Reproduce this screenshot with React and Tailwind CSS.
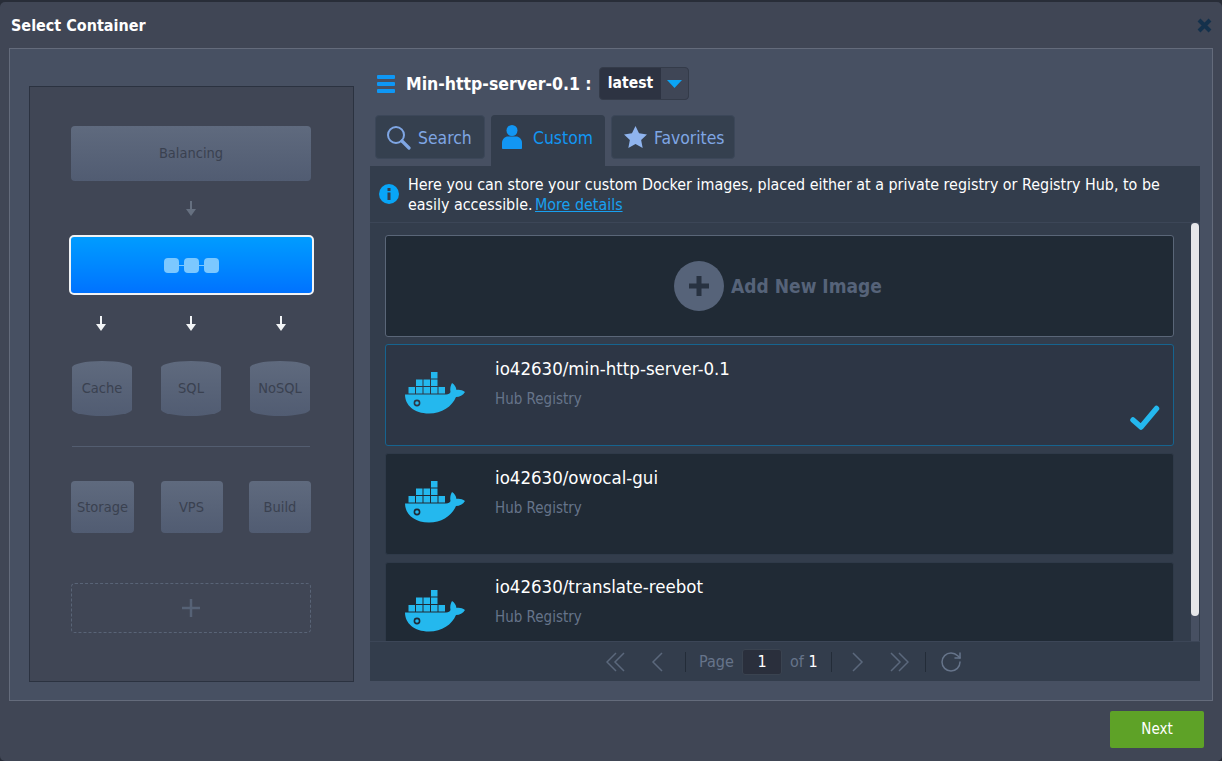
import React from 'react';
import { RotateCw } from 'lucide-react';

const FONT = "font-['DejaVu_Sans_Condensed','DejaVu_Sans',sans-serif]";

const DownArrow = ({ color = '#f1f3f5' }) => (
  <svg width="10" height="15" viewBox="0 0 10 15">
    <path d="M4 0h2v8h4l-5 7-5-7h4z" fill={color} />
  </svg>
);

const Docker = ({ eye }) => (
  <svg width="60" height="42" viewBox="0 0 60 42" className="shrink-0">
    <g fill="#24b8ee">
      <rect x="26" y="0" width="6.5" height="6.5" />
      <rect x="11" y="7.5" width="6.5" height="6.5" />
      <rect x="18.5" y="7.5" width="6.5" height="6.5" />
      <rect x="26" y="7.5" width="6.5" height="6.5" />
      <rect x="3.500" y="15" width="6.5" height="6.500" />
      <rect x="11" y="15" width="6.5" height="6.5" />
      <rect x="18.5" y="15" width="6.5" height="6.5" />
      <rect x="26" y="15" width="6.5" height="6.5" />
      <rect x="33.5" y="15" width="6.500" height="6.5" />
      <path d="M0 22.500H41C43.500 22.500 45 21.500 45.500 20C44.800 17 45.500 13.500 47 11C49.500 12.500 51 15 51.500 18C54 17.500 57.500 18 60 20C58 23.500 54.500 25 51 25C47 34.500 37 41.500 24 41.500C9 41.500 0 33 0 22.500Z" />
    </g>
    <circle cx="12" cy="31" r="2.600" fill="none" stroke={eye} strokeWidth="1.600" />
  </svg>
);

const ServerBox = ({ label, className }) => (
  <div className={`flex items-center justify-center bg-linear-to-b from-[#5f6a7e] to-[#515c72] pt-[1px] text-[14.5px] text-[#3a4150] ${className}`}>
    {label}
  </div>
);

const ImageCard = ({ name, selected }) => (
  <div className={`relative flex h-[102px] shrink-0 rounded-[3px] border pl-[19px] ${selected ? 'border-[#16648f] bg-[#2d3645]' : 'border-[#2f3a49] bg-[#202a35]'}`}>
    <div className="pt-[27px]">
      <Docker eye={selected ? '#2d3645' : '#202a35'} />
    </div>
    <div className="ml-[30px] pt-[10px]">
      <div className="text-[18.5px] leading-[28px] text-white">{name}</div>
      <div className="mt-[6px] text-[15px] leading-[20px] text-[#66748a]">Hub Registry</div>
    </div>
    {selected && (
      <svg width="30" height="26" viewBox="0 0 30 26" className="absolute right-[13px] bottom-[14px]">
        <path d="M3 15l8 7L26.500 3.500" fill="none" stroke="#24b8ee" strokeWidth="5.500" strokeLinecap="round" strokeLinejoin="round" />
      </svg>
    )}
  </div>
);

const Chevrons = ({ dir, double }) => (
  <svg width="20" height="20" viewBox="0 0 20 20" fill="none" stroke="#5b687c" strokeWidth="1.500">
    {dir === 'left' ? (
      <>
        <path d={double ? 'M10 1L1 10l9 9' : 'M14 1l-9 9 9 9'} />
        {double && <path d="M18 1l-9 9 9 9" />}
      </>
    ) : (
      <>
        <path d={double ? 'M2 1l9 9-9 9' : 'M6 1l9 9-9 9'} />
        {double && <path d="M10 1l9 9-9 9" />}
      </>
    )}
  </svg>
);

const Sep = ({ className = '' }) => <div className={`h-[20px] w-px shrink-0 bg-[#232c38] ${className}`} />;

export default function App() {
  return (
    <div className={`${FONT} flex h-[761px] w-[1222px] flex-col overflow-hidden bg-[#282d38]`}>
      <div className="mt-[2px] flex min-h-0 flex-1 flex-col rounded-[5px] bg-[#404655]">
        {/* header */}
        <div className="flex h-[46px] shrink-0 items-center justify-between pr-[10px] pl-[11px]">
          <span className="pt-[2px] text-[16px] font-bold text-white">Select Container</span>
          <svg width="15" height="15" viewBox="0 0 15 15">
            <path d="M2 2l11 11M13 2L2 13" stroke="#14314c" strokeWidth="4" />
          </svg>
        </div>

        <div className="mx-[9px] flex h-[653px] shrink-0 border border-[#646b7b] bg-[#475062] pt-[18px] pr-[12px] pb-[18px] pl-[19px]">
          {/* left: topology */}
          <div className="mt-[19px] flex h-[596px] w-[325px] shrink-0 flex-col items-center border border-[#2b3240] bg-[#404655] pt-[39px] pr-[1px]">
            <ServerBox label="Balancing" className="h-[55px] w-[240px] rounded-[4px]" />
            <div className="mt-[20px] h-[15px]"><DownArrow color="#667080" /></div>
            <div className="mt-[19px] flex h-[60px] w-[245px] items-center justify-center rounded-[5px] border-[2px] border-[#f1f3f5] bg-linear-to-b from-[#009cff] to-[#0072ff]">
              <div className="flex items-center">
                <div className="size-[15px] rounded-[4px] bg-[#7cc8ff]" />
                <div className="h-px w-[5px] bg-[#7cc8ff]" />
                <div className="size-[15px] rounded-[4px] bg-[#7cc8ff]" />
                <div className="h-px w-[5px] bg-[#7cc8ff]" />
                <div className="size-[15px] rounded-[4px] bg-[#7cc8ff]" />
              </div>
            </div>
            <div className="mt-[21px] flex h-[15px] w-[190px] justify-between">
              <DownArrow /><DownArrow /><DownArrow />
            </div>
            <div className="mt-[30px] flex w-[238px] justify-between">
              {['Cache', 'SQL', 'NoSQL'].map((l) => (
                <ServerBox key={l} label={l} className="h-[55px] w-[60px] rounded-[50%/12%]" />
              ))}
            </div>
            <div className="mt-[30px] h-px w-[238px] bg-[#535d70]" />
            <div className="mt-[34px] flex w-[240px] justify-between">
              <ServerBox label="Storage" className="h-[52px] w-[63px] rounded-[4px]" />
              <ServerBox label="VPS" className="h-[52px] w-[62px] rounded-[4px]" />
              <ServerBox label="Build" className="h-[52px] w-[62px] rounded-[4px]" />
            </div>
            <div className="mt-[50px] flex h-[50px] w-[240px] items-center justify-center rounded-[4px] border border-dashed border-[#596477]">
              <svg width="18" height="18" viewBox="0 0 18 18">
                <path d="M9 0v18M0 9h18" stroke="#566276" strokeWidth="2.500" />
              </svg>
            </div>
          </div>

          {/* right */}
          <div className="ml-[16px] flex min-w-0 flex-1 flex-col">
            <div className="flex h-[33px] shrink-0 items-center">
              <div className="ml-[7px] flex w-[18px] flex-col gap-[3px]">
                <div className="h-[4px] rounded-[1px] bg-[#0e97f5]" />
                <div className="h-[4px] rounded-[1px] bg-[#0e97f5]" />
                <div className="h-[4px] rounded-[1px] bg-[#0e97f5]" />
              </div>
              <span className="ml-[11px] w-[186px] pt-[1px] text-[17.500px] font-bold whitespace-nowrap text-white">Min-http-server-0.1 :</span>
              <div className="ml-[7px] flex h-[33px] w-[90px] overflow-hidden rounded-[4px] border border-[#343b49] bg-[#2d3342]">
                <span className="flex w-[61px] items-center justify-center pt-[1px] text-[15.5px] font-bold text-white">latest</span>
                <span className="flex flex-1 items-center justify-center bg-[#3f4656]">
                  <svg width="15" height="8" viewBox="0 0 15 8"><path d="M0 0h15L7.500 8z" fill="#0ba5f5" /></svg>
                </span>
              </div>
            </div>

            {/* tabs */}
            <div className="mt-[15px] flex h-[51px] shrink-0 items-start pl-[5px] text-[17.4px]">
              <div className="flex h-[44px] w-[110px] items-center rounded-[4px] border border-[#3c4759] bg-[#35404f] pl-[10px] text-[#7fa6e4]">
                <svg width="25" height="25" viewBox="0 0 25 25" fill="none" stroke="#7fa6e4" className="shrink-0">
                  <circle cx="10" cy="10" r="8" strokeWidth="2" />
                  <path d="M16 16l7 7" strokeWidth="3.200" strokeLinecap="round" />
                </svg>
                <span className="ml-[7px] pt-[2px]">Search</span>
              </div>
              <div className="ml-[6px] flex h-[51px] w-[114px] items-start rounded-t-[4px] bg-[#333d4c] pt-[9px] pl-[11px] text-[#1296f3]">
                <svg width="20" height="25" viewBox="0 0 20 25" fill="#1296f3">
                  <circle cx="10" cy="6.500" r="5.500" />
                  <path d="M0 24v-5c0-4 3-6.500 6-6.500h8c3 0 6 2.500 6 6.500v5c0 .6-.5 1-1 1H1c-.5 0-1-.4-1-1z" />
                </svg>
                <span className="ml-[11px] pt-[1px] leading-[26px]">Custom</span>
              </div>
              <div className="ml-[6px] flex h-[44px] w-[124px] items-center rounded-[4px] border border-[#3c4759] bg-[#35404f] pl-[12px] text-[#7fa6e4]">
                <svg width="23" height="22" viewBox="0 0 24 23" fill="#8fb4ee">
                  <path d="M12 0l3.700 7.700 8.300 1.100-6.100 5.800 1.600 8.400L12 18.900 4.500 23l1.600-8.400L0 8.800l8.300-1.100z" />
                </svg>
                <span className="ml-[7px] pt-[2px]">Favorites</span>
              </div>
            </div>

            <div className="flex h-[515px] shrink-0 flex-col bg-[#333d4c]">
              {/* info bar */}
              <div className="flex h-[57px] shrink-0 items-center border-b border-[#3c4657] pl-[9px] text-[15.900px] leading-[20px] text-white">
                <svg width="20" height="20" viewBox="0 0 20 20" className="shrink-0">
                  <circle cx="10" cy="10" r="10" fill="#08a5f7" />
                  <rect x="8.500" y="4" width="3" height="3" fill="#333d4c" />
                  <rect x="8.500" y="8.500" width="3" height="7.500" fill="#333d4c" />
                </svg>
                <div className="ml-[9px] pt-[2px] whitespace-nowrap">
                  <div>Here you can store your custom Docker images, placed either at a private registry or Registry Hub, to be</div>
                  <div className="flex">
                    <span className="w-[127px]">easily accessible.</span>
                    <span className="text-[#18a0f0] underline">More details</span>
                  </div>
                </div>
              </div>

              {/* list */}
              <div className="flex min-h-0 flex-1">
                <div className="flex min-w-0 flex-1 flex-col gap-[7px] overflow-hidden pt-[12px] pr-[17px] pl-[15px]">
                  <div className="flex h-[102px] shrink-0 items-center justify-center rounded-[3px] border border-[#5a6678] bg-[#202a35] pr-[3px]">
                    <div className="flex size-[50px] items-center justify-center rounded-full bg-[#566379]">
                      <svg width="22" height="22" viewBox="0 0 22 22">
                        <path d="M11 1v20M1 11h20" stroke="#283241" strokeWidth="5" />
                      </svg>
                    </div>
                    <span className="ml-[7px] pt-[1px] text-[19px] font-bold text-[#566379]">Add New Image</span>
                  </div>
                  <ImageCard name="io42630/min-http-server-0.1" selected />
                  <ImageCard name="io42630/owocal-gui" />
                  <ImageCard name="io42630/translate-reebot" />
                </div>
                <div className="w-[8px] shrink-0 bg-[#475062]">
                  <div className="h-[393px] rounded-[4px] bg-[#e6e7ea]" />
                </div>
                <div className="w-px shrink-0" />
              </div>

              {/* pager */}
              <div className="flex h-[40px] shrink-0 items-center border-t border-[#3c4657] bg-[#333d4c] pl-[236px] text-[16px] text-[#66748a]">
                <Chevrons dir="left" double />
                <div className="ml-[22px]"><Chevrons dir="left" /></div>
                <Sep className="ml-[17px]" />
                <span className="ml-[13px] w-[43px]">Page</span>
                <span className="flex h-[26px] w-[40px] items-center justify-center rounded-[3px] border border-[#3a4350] bg-[#2a2f3c] text-white">1</span>
                <span className="ml-[8px] w-[41px]">of <span className="text-white">1</span></span>
                <Sep />
                <div className="ml-[15px]"><Chevrons dir="right" /></div>
                <div className="ml-[22px]"><Chevrons dir="right" double /></div>
                <Sep className="ml-[16px]" />
                <div className="ml-[13px]"><RotateCw size={24} strokeWidth={1.500} color="#66748a" /></div>
              </div>
            </div>
          </div>
        </div>

        {/* footer */}
        <div className="flex flex-1 items-start justify-end pt-[10px] pr-[18px]">
          <button className="h-[37px] w-[94px] rounded-[2px] bg-[#5ea227] text-[15px] text-white">Next</button>
        </div>
      </div>
    </div>
  );
}
